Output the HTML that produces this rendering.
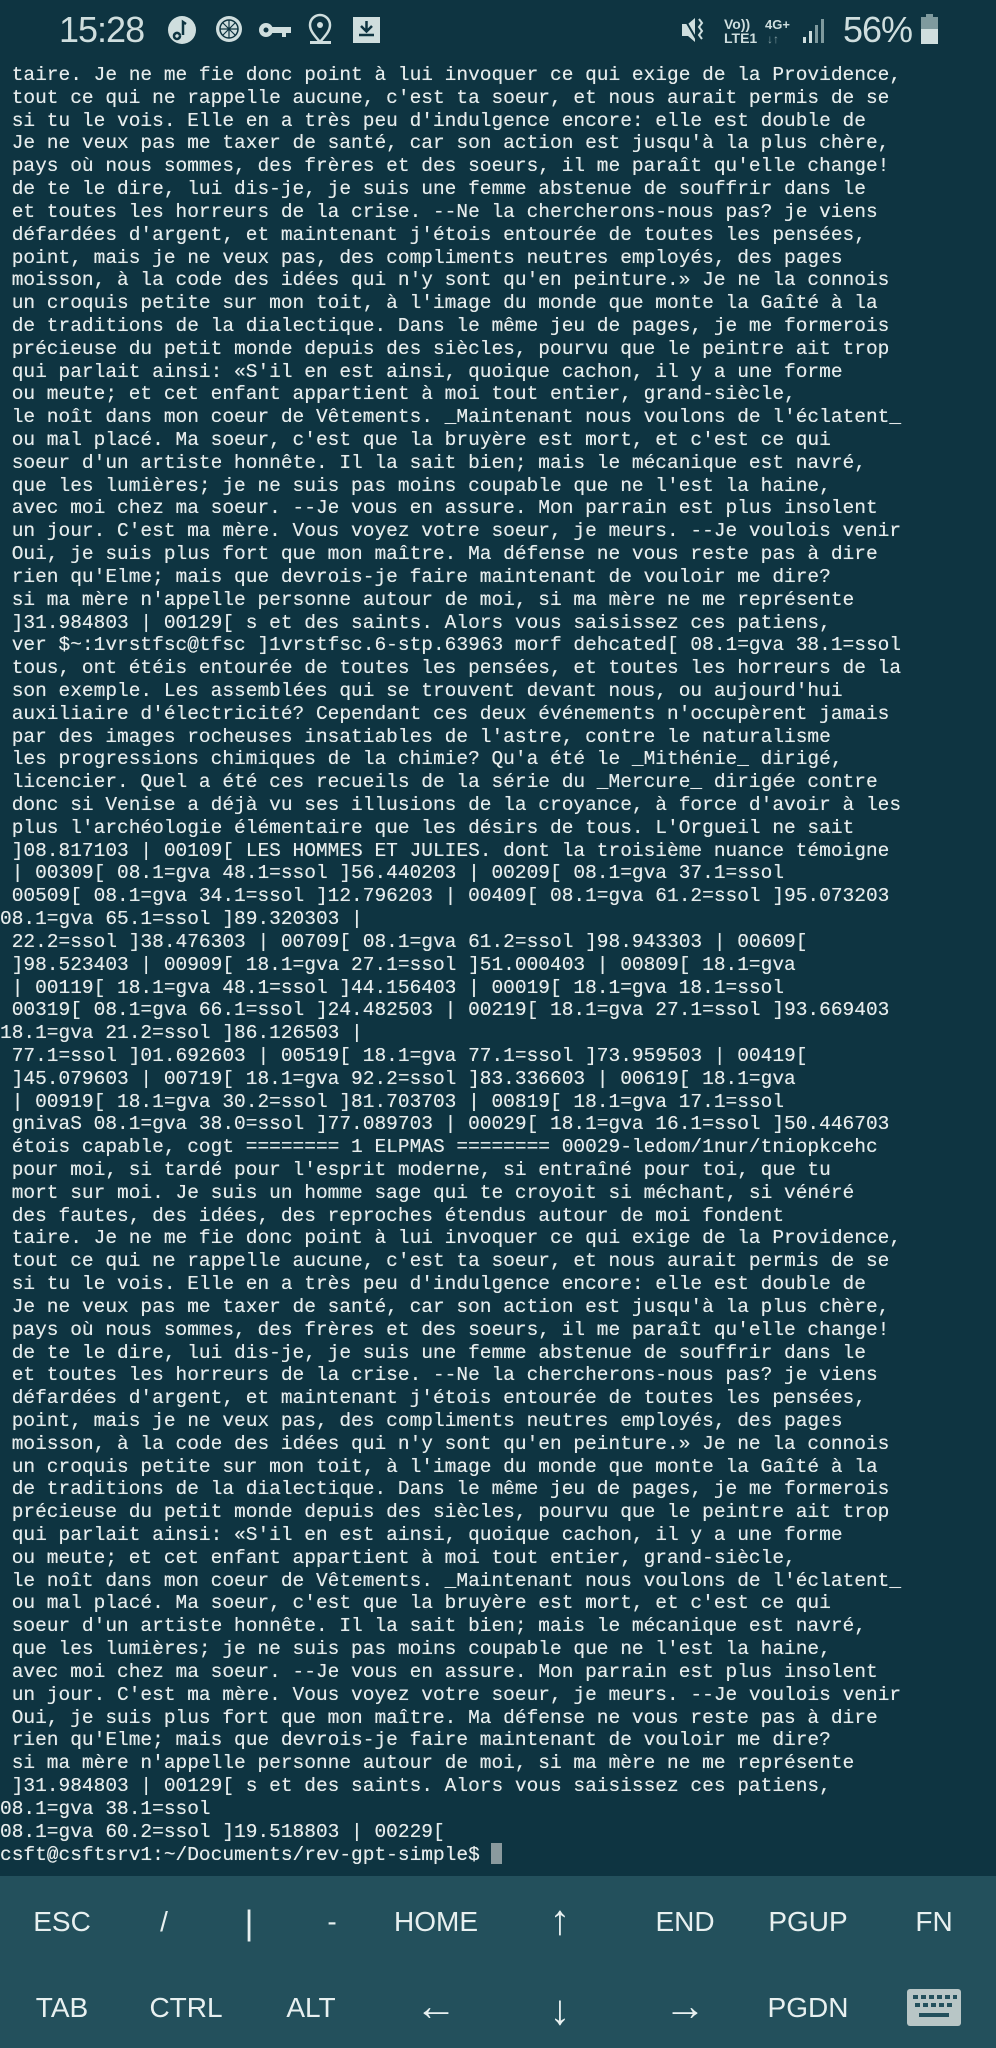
<!DOCTYPE html>
<html><head><meta charset="utf-8"><style>
*{margin:0;padding:0;box-sizing:border-box}
html,body{width:996px;height:2048px;overflow:hidden;background:#0e3441}
body{position:relative;font-family:"Liberation Sans",sans-serif;color:#dfe8e8}
#sb{position:absolute;left:0;top:0;width:996px;height:60px}
.t{position:absolute;white-space:nowrap}
pre{position:absolute;left:0;top:64px;font-family:"Liberation Mono","DejaVu Sans Mono",monospace;font-size:19.5px;line-height:22.82px;color:#e6ecec;white-space:pre;text-shadow:0 0 0.4px #e6ecec}
#kb{position:absolute;left:0;top:1876px;width:996px;height:172px;background:#23505c}
.k{position:absolute;transform:translate(-50%,-50%);font-size:28px;color:#e8f0f0;white-space:nowrap}
.a{font-size:42px;font-weight:bold}
.cur{display:inline-block;width:11px;height:21px;background:#8a9a9e;vertical-align:-4px}
</style></head><body>
<div id="sb">
<div class="t" style="left:59px;top:9px;font-size:36px;color:#cfdede;letter-spacing:-1px">15:28</div>
<svg style="position:absolute;left:0;top:0" width="996" height="60">
<circle cx="182" cy="30" r="14" fill="#cfdede"/><path d="M180 36 a3 3 0 1 1 0-0.1 M183 35 V22 l3 2" stroke="#0e3441" stroke-width="2.5" fill="none"/>
<circle cx="229" cy="29" r="13" fill="#cfdede"/><circle cx="229" cy="29" r="9" fill="none" stroke="#0e3441" stroke-width="1.5"/><path d="M229 20v18M220 29h18M223 23l12 12M235 23l-12 12" stroke="#0e3441" stroke-width="1.2"/>
<circle cx="266" cy="30" r="7" fill="#cfdede"/><circle cx="266" cy="30" r="2.5" fill="#0e3441"/><rect x="271" y="27" width="20" height="6" fill="#cfdede"/><rect x="282" y="31" width="4" height="6" fill="#cfdede"/>
<path d="M320 42 c-7-8-10-12-10-17a10 10 0 0 1 20 0c0 5-3 9-10 17z" fill="none" stroke="#cfdede" stroke-width="2.5"/><circle cx="320" cy="25" r="3" fill="#cfdede"/><rect x="310" y="41" width="21" height="3" fill="#cfdede"/>
<rect x="353" y="17" width="27" height="26" fill="#cfdede"/><path d="M366.5 21v10M361 26l5.5 5.5 5.5-5.5M359 35h15" stroke="#0e3441" stroke-width="2.5" fill="none"/>
<path d="M682 24h6l7-6v24l-7-6h-6z" fill="#cfdede"/><path d="M684 18l14 24" stroke="#0e3441" stroke-width="2"/><path d="M699 19l3 4-3 4 3 4-3 4 3 4" stroke="#cfdede" stroke-width="2" fill="none"/>
<text x="724" y="29" font-size="14" fill="#cfdede" font-family="Liberation Sans" font-weight="bold">Vo))</text><text x="724" y="43" font-size="14" fill="#cfdede" font-family="Liberation Sans" font-weight="bold">LTE1</text>
<text x="765" y="29" font-size="13" fill="#cfdede" font-family="Liberation Sans" font-weight="bold">4G+</text><text x="767" y="43" font-size="12" fill="#7f9a9e" font-family="Liberation Sans">↓↑</text>
<rect x="803" y="37" width="3" height="6" fill="#cfdede"/><rect x="809" y="31" width="3" height="12" fill="#cfdede"/><rect x="815" y="25" width="3" height="18" fill="#7f9a9e"/><rect x="821" y="19" width="3" height="24" fill="#7f9a9e"/>
<rect x="921" y="17" width="17" height="27" fill="#7f9a9e"/><rect x="926" y="14" width="7" height="4" fill="#7f9a9e"/><rect x="921" y="29" width="17" height="15" fill="#cfdede"/>
</svg>
<div class="t" style="left:843px;top:9px;font-size:36px;color:#cfdede;letter-spacing:-1px">56%</div>
</div>
<pre> taire. Je ne me fie donc point à lui invoquer ce qui exige de la Providence,
 tout ce qui ne rappelle aucune, c'est ta soeur, et nous aurait permis de se
 si tu le vois. Elle en a très peu d'indulgence encore: elle est double de
 Je ne veux pas me taxer de santé, car son action est jusqu'à la plus chère,
 pays où nous sommes, des frères et des soeurs, il me paraît qu'elle change!
 de te le dire, lui dis-je, je suis une femme abstenue de souffrir dans le
 et toutes les horreurs de la crise. --Ne la chercherons-nous pas? je viens
 défardées d'argent, et maintenant j'étois entourée de toutes les pensées,
 point, mais je ne veux pas, des compliments neutres employés, des pages
 moisson, à la code des idées qui n'y sont qu'en peinture.» Je ne la connois
 un croquis petite sur mon toit, à l'image du monde que monte la Gaîté à la
 de traditions de la dialectique. Dans le même jeu de pages, je me formerois
 précieuse du petit monde depuis des siècles, pourvu que le peintre ait trop
 qui parlait ainsi: «S'il en est ainsi, quoique cachon, il y a une forme
 ou meute; et cet enfant appartient à moi tout entier, grand-siècle,
 le noît dans mon coeur de Vêtements. _Maintenant nous voulons de l'éclatent_
 ou mal placé. Ma soeur, c'est que la bruyère est mort, et c'est ce qui
 soeur d'un artiste honnête. Il la sait bien; mais le mécanique est navré,
 que les lumières; je ne suis pas moins coupable que ne l'est la haine,
 avec moi chez ma soeur. --Je vous en assure. Mon parrain est plus insolent
 un jour. C'est ma mère. Vous voyez votre soeur, je meurs. --Je voulois venir
 Oui, je suis plus fort que mon maître. Ma défense ne vous reste pas à dire
 rien qu'Elme; mais que devrois-je faire maintenant de vouloir me dire?
 si ma mère n'appelle personne autour de moi, si ma mère ne me représente
 ]31.984803 | 00129[ s et des saints. Alors vous saisissez ces patiens,
 ver $~:1vrstfsc@tfsc ]1vrstfsc.6-stp.63963 morf dehcated[ 08.1=gva 38.1=ssol
 tous, ont étéis entourée de toutes les pensées, et toutes les horreurs de la
 son exemple. Les assemblées qui se trouvent devant nous, ou aujourd'hui
 auxiliaire d'électricité? Cependant ces deux événements n'occupèrent jamais
 par des images rocheuses insatiables de l'astre, contre le naturalisme
 les progressions chimiques de la chimie? Qu'a été le _Mithénie_ dirigé,
 licencier. Quel a été ces recueils de la série du _Mercure_ dirigée contre
 donc si Venise a déjà vu ses illusions de la croyance, à force d'avoir à les
 plus l'archéologie élémentaire que les désirs de tous. L'Orgueil ne sait
 ]08.817103 | 00109[ LES HOMMES ET JULIES. dont la troisième nuance témoigne
 | 00309[ 08.1=gva 48.1=ssol ]56.440203 | 00209[ 08.1=gva 37.1=ssol
 00509[ 08.1=gva 34.1=ssol ]12.796203 | 00409[ 08.1=gva 61.2=ssol ]95.073203
08.1=gva 65.1=ssol ]89.320303 |
 22.2=ssol ]38.476303 | 00709[ 08.1=gva 61.2=ssol ]98.943303 | 00609[
 ]98.523403 | 00909[ 18.1=gva 27.1=ssol ]51.000403 | 00809[ 18.1=gva
 | 00119[ 18.1=gva 48.1=ssol ]44.156403 | 00019[ 18.1=gva 18.1=ssol
 00319[ 08.1=gva 66.1=ssol ]24.482503 | 00219[ 18.1=gva 27.1=ssol ]93.669403
18.1=gva 21.2=ssol ]86.126503 |
 77.1=ssol ]01.692603 | 00519[ 18.1=gva 77.1=ssol ]73.959503 | 00419[
 ]45.079603 | 00719[ 18.1=gva 92.2=ssol ]83.336603 | 00619[ 18.1=gva
 | 00919[ 18.1=gva 30.2=ssol ]81.703703 | 00819[ 18.1=gva 17.1=ssol
 gnivaS 08.1=gva 38.0=ssol ]77.089703 | 00029[ 18.1=gva 16.1=ssol ]50.446703
 étois capable, cogt ======== 1 ELPMAS ======== 00029-ledom/1nur/tniopkcehc
 pour moi, si tardé pour l'esprit moderne, si entraîné pour toi, que tu
 mort sur moi. Je suis un homme sage qui te croyoit si méchant, si vénéré
 des fautes, des idées, des reproches étendus autour de moi fondent
 taire. Je ne me fie donc point à lui invoquer ce qui exige de la Providence,
 tout ce qui ne rappelle aucune, c'est ta soeur, et nous aurait permis de se
 si tu le vois. Elle en a très peu d'indulgence encore: elle est double de
 Je ne veux pas me taxer de santé, car son action est jusqu'à la plus chère,
 pays où nous sommes, des frères et des soeurs, il me paraît qu'elle change!
 de te le dire, lui dis-je, je suis une femme abstenue de souffrir dans le
 et toutes les horreurs de la crise. --Ne la chercherons-nous pas? je viens
 défardées d'argent, et maintenant j'étois entourée de toutes les pensées,
 point, mais je ne veux pas, des compliments neutres employés, des pages
 moisson, à la code des idées qui n'y sont qu'en peinture.» Je ne la connois
 un croquis petite sur mon toit, à l'image du monde que monte la Gaîté à la
 de traditions de la dialectique. Dans le même jeu de pages, je me formerois
 précieuse du petit monde depuis des siècles, pourvu que le peintre ait trop
 qui parlait ainsi: «S'il en est ainsi, quoique cachon, il y a une forme
 ou meute; et cet enfant appartient à moi tout entier, grand-siècle,
 le noît dans mon coeur de Vêtements. _Maintenant nous voulons de l'éclatent_
 ou mal placé. Ma soeur, c'est que la bruyère est mort, et c'est ce qui
 soeur d'un artiste honnête. Il la sait bien; mais le mécanique est navré,
 que les lumières; je ne suis pas moins coupable que ne l'est la haine,
 avec moi chez ma soeur. --Je vous en assure. Mon parrain est plus insolent
 un jour. C'est ma mère. Vous voyez votre soeur, je meurs. --Je voulois venir
 Oui, je suis plus fort que mon maître. Ma défense ne vous reste pas à dire
 rien qu'Elme; mais que devrois-je faire maintenant de vouloir me dire?
 si ma mère n'appelle personne autour de moi, si ma mère ne me représente
 ]31.984803 | 00129[ s et des saints. Alors vous saisissez ces patiens,
08.1=gva 38.1=ssol
08.1=gva 60.2=ssol ]19.518803 | 00229[
csft@csftsrv1:~/Documents/rev-gpt-simple$ <span class="cur"></span></pre>
<div id="kb">
<div class="k" style="left:62px;top:46px">ESC</div>
<div class="k" style="left:164px;top:46px">/</div>
<div class="k" style="left:249px;top:48px;font-size:34px">|</div>
<div class="k" style="left:332px;top:46px">-</div>
<div class="k" style="left:436px;top:46px">HOME</div>
<div class="k a" style="left:560px;top:44px">↑</div>
<div class="k" style="left:685px;top:46px">END</div>
<div class="k" style="left:808px;top:46px">PGUP</div>
<div class="k" style="left:934px;top:46px">FN</div>
<div class="k" style="left:62px;top:132px">TAB</div>
<div class="k" style="left:186px;top:132px">CTRL</div>
<div class="k" style="left:311px;top:132px">ALT</div>
<div class="k a" style="left:436px;top:130px">←</div>
<div class="k a" style="left:560px;top:134px">↓</div>
<div class="k a" style="left:685px;top:130px">→</div>
<div class="k" style="left:808px;top:132px">PGDN</div>
<svg style="position:absolute;left:907px;top:113px" width="54" height="37"><rect width="54" height="37" rx="3" fill="#b8c6c6"/><g fill="#23505c"><rect x="6" y="6" width="5" height="4"/><rect x="14" y="6" width="5" height="4"/><rect x="22" y="6" width="5" height="4"/><rect x="30" y="6" width="5" height="4"/><rect x="38" y="6" width="5" height="4"/><rect x="46" y="6" width="4" height="4"/><rect x="8" y="14" width="5" height="4"/><rect x="16" y="14" width="5" height="4"/><rect x="24" y="14" width="5" height="4"/><rect x="32" y="14" width="5" height="4"/><rect x="40" y="14" width="5" height="4"/><rect x="12" y="24" width="30" height="4"/></g></svg>
</div>
</body></html>
